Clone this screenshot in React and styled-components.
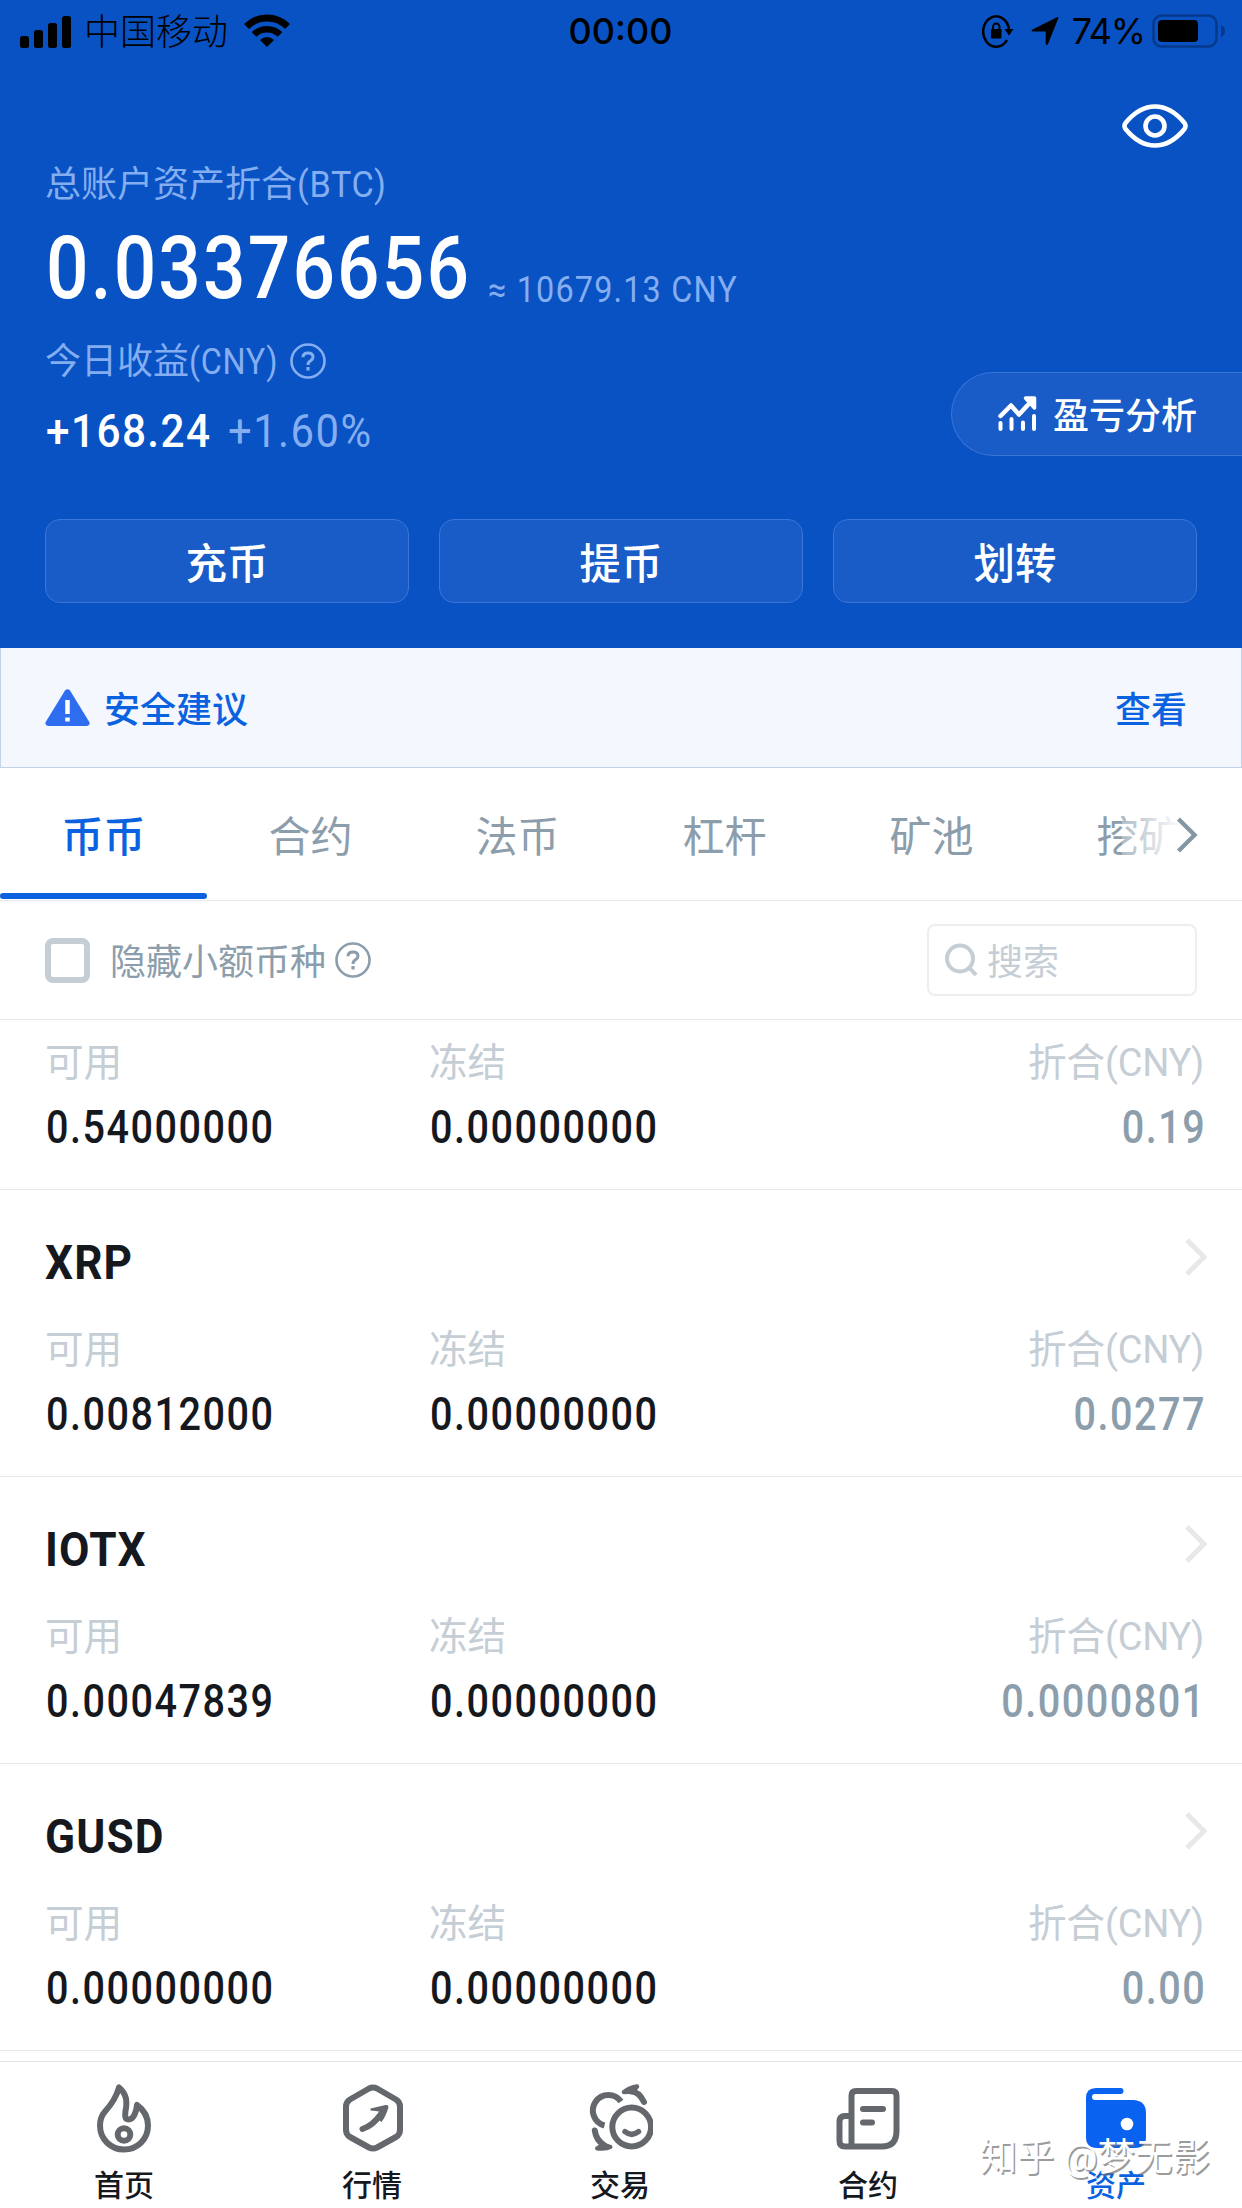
import styled, { createGlobalStyle } from "styled-components";

const GlobalStyle = createGlobalStyle`
  * {
    box-sizing: border-box;
  }
  body {
    margin: 0;
    background: #fff;
    font-family: Roboto, "Noto Sans CJK SC", sans-serif;
    color: #15181d;
  }
  svg {
    display: block;
    flex-shrink: 0;
  }
`;

const Screen = styled.div`
  position: relative;
  width: 1242px;
  height: 2208px;
  display: flex;
  flex-direction: column;
  overflow: hidden;
  background: #fff;
`;

/* narrows latin text and digits to DIN proportions */
const Din = styled.span`
  display: inline-block;
  transform: scaleX(${(props) => props.$fit || 0.86});
  transform-origin: ${(props) => (props.$right ? "right" : "left")} center;
  letter-spacing: ${(props) => props.$gap || "0.038em"};
  margin-right: ${(props) => (props.$right ? "-0.038em" : 0)};
  white-space: nowrap;
`;

/* header */
const Header = styled.header`
  height: 648px;
  flex-shrink: 0;
  background: #0852c4;
  color: #fff;
`;
const StatusBar = styled.div`
  height: 62px;
  display: grid;
  grid-template-columns: 1fr auto 1fr;
  align-items: center;
  padding: 0 16px;
  color: #000;
  font-family: Inter, "Noto Sans CJK SC", sans-serif;
`;
const StatusSide = styled.div`
  display: flex;
  align-items: center;
  justify-content: ${(props) => (props.$end ? "flex-end" : "flex-start")};
`;
const StatusGlyphs = styled.div`
  display: flex;
  align-items: center;
  gap: 17px;
`;
const Carrier = styled.span`
  margin: 1px 16px 0 12px;
  font-size: 36px;
  line-height: 40px;
  font-weight: 300;
`;
const Clock = styled.span`
  padding-right: 1px;
  font-size: 36px;
  font-weight: 500;
  line-height: 40px;
`;
const Percent = styled.span`
  margin: 0 7px 0 13px;
  font-size: 36px;
  line-height: 40px;
  letter-spacing: -1.2px;
`;
const Toolbar = styled.div`
  height: 98px;
  padding: 30px 53px 0 0;
  display: flex;
  align-items: center;
  justify-content: flex-end;
`;
const Caption = styled.div`
  display: flex;
  align-items: center;
  height: 48px;
  padding-left: 45px;
  font-size: 36px;
  line-height: 50px;
  color: #84aef0;
`;
const CaptionText = styled.span`
  padding-top: 2px;
`;
const CaptionUnit = styled.span`
  display: inline-block;
  width: ${(props) => props.$width || "auto"};
  padding-top: 2px;
`;
const TotalRow = styled.div`
  display: flex;
  height: 100px;
  margin: 10px 0 19px;
  padding-left: 46px;
`;
const Total = styled.div`
  width: 423px;
  font-size: 87px;
  font-weight: 500;
  line-height: 100px;
`;
const Approx = styled.div`
  margin: 48px 0 0 19px;
  font-size: 36px;
  line-height: 48px;
  color: #84aef0;
`;
const ProfitRow = styled.div`
  display: flex;
  justify-content: space-between;
  height: 123px;
`;
const Profit = styled.div`
  display: grid;
  grid-template-columns: 182px auto;
  margin-top: 16px;
  padding-left: 46px;
  font-size: 47px;
  line-height: 60px;
  font-weight: 500;
`;
const ProfitRate = styled.span`
  font-weight: 400;
  color: #84aef0;
`;
const AnalysisButton = styled.button`
  display: flex;
  align-items: center;
  gap: 16px;
  width: 291px;
  height: 84px;
  margin-top: 35px;
  padding: 0 0 2px 46px;
  border: 1px solid #3a75d8;
  border-right: 0;
  border-radius: 42px 0 0 42px;
  background: #195cc7;
  color: #fff;
  font-family: inherit;
  font-size: 36px;
  font-weight: 500;
`;
const Actions = styled.div`
  display: grid;
  grid-template-columns: repeat(3, 1fr);
  gap: 30px;
  margin-top: 59px;
  padding: 0 45px;
`;
const ActionButton = styled.button`
  height: 84px;
  padding: 0 0 1px;
  border: 1px solid #3a75d8;
  border-radius: 15px;
  background: #195cc7;
  color: #fff;
  font-family: inherit;
  font-size: 41.5px;
  font-weight: 500;
`;

/* notice */
const Notice = styled.div`
  display: flex;
  align-items: center;
  height: 120px;
  flex-shrink: 0;
  padding: 0 54px 0 44px;
  border: 1px solid #bfd3ea;
  border-top: 0;
  background: #f4f7fe;
  color: #0a62e0;
  font-size: 36px;
  font-weight: 500;
`;
const NoticeText = styled.span`
  flex: 1;
  margin: -1px 0 0 14px;
`;
const NoticeLink = styled.span`
  margin-top: -1px;
`;

/* tabs */
const TabBar = styled.nav`
  position: relative;
  display: flex;
  height: 133px;
  flex-shrink: 0;
  border-bottom: 1px solid #e6e9ec;
  overflow: hidden;
`;
const Tab = styled.div`
  display: flex;
  flex-direction: column;
  justify-content: space-between;
  flex: 0 0 207px;
  height: 131px;
  padding-top: 40px;
  text-align: center;
  font-size: 42px;
  line-height: 60px;
  font-weight: ${(props) => (props.$active ? 500 : 400)};
  color: ${(props) => (props.$active ? "#0a62e0" : "#8c9dab")};

  &::after {
    content: "";
    height: 6px;
    border-radius: 3px;
    background: ${(props) => (props.$active ? "#0a62e0" : "transparent")};
  }
`;
const TabFade = styled.div`
  position: absolute;
  top: 0;
  right: 0;
  display: flex;
  align-items: center;
  justify-content: flex-end;
  width: 120px;
  height: 131px;
  padding: 2px 44px 0 0;
  background: linear-gradient(to right, rgba(255, 255, 255, 0.3), #fff 50%);
`;

/* filter */
const FilterRow = styled.div`
  display: flex;
  align-items: center;
  height: 119px;
  flex-shrink: 0;
  padding: 0 45px;
  border-bottom: 1px solid #e6e9ec;
  color: #8c9dab;
  font-size: 36px;
`;
const Checkbox = styled.div`
  width: 45px;
  height: 45px;
  margin-right: 20px;
  border: 6px solid #c5cdd5;
  border-radius: 8px;
`;
const FilterLabel = styled.div`
  display: flex;
  align-items: center;
  gap: 9px;
  flex: 1;
`;
const FieldText = styled.span`
  margin-top: -2px;
`;
const SearchBox = styled.div`
  display: flex;
  align-items: center;
  gap: 9px;
  width: 270px;
  height: 72px;
  padding-left: 16px;
  border: 2px solid #eceef0;
  border-radius: 8px;
  color: #c5cdd5;
`;

/* coins */
const CoinList = styled.div`
  height: 1031px;
  flex-shrink: 0;
  display: flex;
  flex-direction: column;
  justify-content: flex-end;
  overflow: hidden;
`;
const Coin = styled.section`
  height: 287px;
  flex-shrink: 0;
  padding: 36px 38px 0 45px;
  border-bottom: 1px solid #e6e9ec;
`;
const CoinHead = styled.div`
  display: flex;
  align-items: center;
  justify-content: space-between;
  height: 72px;
  margin-right: -3px;

  svg {
    margin-bottom: 10px;
  }
`;
const CoinName = styled.h3`
  margin: 2px 0 0;
  font-size: 48px;
  line-height: 60px;
  font-weight: 700;
`;
const CoinStats = styled.div`
  display: grid;
  grid-template-columns: 384px 1fr auto;
  margin-top: 26px;
`;
const Stat = styled.div`
  text-align: ${(props) => (props.$right ? "right" : "left")};
`;
const StatLabel = styled.div`
  font-size: 38.6px;
  line-height: 52px;
  color: #c5cdd5;
`;
const StatUnit = styled.span`
  font-size: 38px;
  letter-spacing: -0.3px;
`;
const StatValue = styled.div`
  margin-top: 10px;
  padding-left: 1px;
  font-size: 46px;
  line-height: 56px;
  font-weight: 500;
  color: ${(props) => (props.$muted ? "#8c9dab" : "#15181d")};
`;

/* bottom nav */
const BottomNav = styled.nav`
  display: grid;
  grid-template-columns: repeat(5, 1fr);
  height: 147px;
  margin-top: 10px;
  padding-right: 2px;
  border-top: 1px solid #dfe3e6;
`;
const NavItem = styled.div`
  display: flex;
  flex-direction: column;
  align-items: center;
  padding-top: 20px;
  font-size: 30px;
  line-height: 40px;
  font-weight: 500;
  color: ${(props) => (props.$active ? "#0a62e0" : "#15181d")};

  svg {
    margin-bottom: 12px;
  }
`;
const Watermark = styled.div`
  position: absolute;
  right: 32px;
  bottom: 24px;
  font-size: 37.5px;
  line-height: 54px;
  color: #fff;
  text-shadow: 1.5px 2px 0.5px rgba(110, 110, 110, 0.7);
`;

const SignalIcon = () => (
  <svg width="56" height="33" viewBox="-4 0 56 33">
    <rect x="0" y="21" width="9" height="12" rx="2.5" />
    <rect x="14" y="15" width="9" height="18" rx="2.5" />
    <rect x="28" y="8" width="9" height="25" rx="2.5" />
    <rect x="42" y="1" width="9" height="32" rx="2.5" />
  </svg>
);

const WifiIcon = () => (
  <svg width="46" height="34" viewBox="0 0 46 34" fill="none" stroke="#000">
    <path d="M2.5 12.5A29 29 0 0 1 43.5 12.5" strokeWidth="7" />
    <path d="M10 20.5A18.5 18.5 0 0 1 36 20.5" strokeWidth="6.5" />
    <path d="M16 26Q23 20 30 26L23 33Z" fill="#000" stroke="none" />
  </svg>
);

const RotationLockIcon = () => (
  <svg width="32" height="34" viewBox="0 -2 32 34" fill="none" stroke="#000">
    <path d="M25 24A13 15.2 0 1 1 27 13" strokeWidth="2.5" />
    <path d="M22.5 13H31.5L27 19.5Z" fill="#000" stroke="none" />
    <rect x="9" y="13" width="10.5" height="9.5" rx="1" fill="#000" stroke="none" />
    <path d="M11 14V11A3.2 3.4 0 0 1 17.5 11V14" strokeWidth="2" />
  </svg>
);

const LocationIcon = () => (
  <svg width="28" height="30" viewBox="0 0 28 30">
    <path d="M1.5 13.5L26 1.2Q28 .5 27.2 2.5L17 28Q15.5 30.5 14.7 27.5V15.5H2Q-.5 15 1.5 13.5Z" />
  </svg>
);

const BatteryIcon = () => (
  <svg width="74" height="34" viewBox="0 0 74 34">
    <rect x="1.5" y="1.5" width="63" height="31" rx="8" fill="none" stroke="#06398a" strokeWidth="2.5" />
    <rect x="6" y="6" width="40" height="22" rx="4" />
    <path d="M69 11Q73 13 73 17T69 23Z" fill="#06398a" />
  </svg>
);

const EyeIcon = () => (
  <svg width="68" height="44" viewBox="0 0 68 44" fill="none" stroke="#fff" strokeWidth="4.6">
    <path d="M4.5 19Q18 2.5 34 2.5T63.5 19Q65.5 22 63.5 25Q50 41.5 34 41.5T4.5 25Q2.5 22 4.5 19Z" />
    <circle cx="34" cy="22" r="9.5" />
  </svg>
);

const HelpIcon = () => (
  <svg width="36" height="36" viewBox="0 0 36 36" fill="none" stroke="currentColor">
    <circle cx="18" cy="18" r="16.5" strokeWidth="2.6" />
    <path d="M13 14.2Q13 10 18 10T23 14Q23 16 20.5 17.7Q18 19.2 18 22" strokeWidth="3" />
    <path d="M18 24V27.5" strokeWidth="3.2" />
  </svg>
);

const TrendIcon = () => (
  <svg width="39" height="36" viewBox="0 0 39 36" fill="none" stroke="#fff" strokeWidth="4.5" strokeLinecap="round" strokeLinejoin="round">
    <path d="M2.5 21L13 10.5L21 19.5L34 5.5" />
    <path d="M27.5 3H36.5V13Z" fill="#fff" strokeWidth="3.5" />
    <path d="M2.5 28V34M13.5 24V34M25 27.5V34M36 21V34" strokeWidth="4" />
  </svg>
);

const WarningIcon = () => (
  <svg width="45" height="37" viewBox="0 0 45 37">
    <path d="M20 1.5Q22.5 -1.2 25 1.5L44.3 33Q45.5 36.5 42 37H3Q-.5 36.5 .7 33Z" fill="#2f6df0" />
    <path d="M22.5 11V25M22.5 28.5V32.5" stroke="#fff" strokeWidth="4.5" />
  </svg>
);

const Chevron = ({ color, strokeWidth, width, height }) => (
  <svg width={width} height={height} viewBox="0 0 22 38" fill="none" stroke={color} strokeWidth={strokeWidth}>
    <path d="M2 2L19 19L2 36" />
  </svg>
);

const SearchIcon = () => (
  <svg width="33" height="34" viewBox="0 0 33 34" fill="none" stroke="#c5cdd5" strokeWidth="4">
    <circle cx="15" cy="15.5" r="13" />
    <path d="M24.5 25L31 32" />
  </svg>
);

const HomeIcon = () => (
  <svg width="62" height="72" viewBox="0 0 62 72" fill="none" stroke="#64686d" strokeWidth="6" strokeLinejoin="round">
    <path d="M26 5.5C23 16 18 23 12 29.5C8.5 33.5 7 38 7 43.5C7 57.5 18 67.5 31 67.5C44.5 67.5 55 57 55 43.5C55 35 51 28 44 23C43.5 30 40.5 37.5 35.5 37.5C31.5 37.5 32 33.5 32.5 29C34.5 19 33.5 12 26 5.5Z" />
    <circle cx="31" cy="52.5" r="6.3" />
  </svg>
);

const MarketIcon = () => (
  <svg width="62" height="72" viewBox="0 0 62 72" fill="none" stroke="#64686d" strokeWidth="6" strokeLinejoin="round">
    <path d="M28 6.5Q32 4.5 36 6.5L55 17.5Q59 20 59 24.5V48Q59 52.5 55 55L36 65.5Q32 67.5 28 65.5L9 55Q5 52.5 5 48V24.5Q5 20 9 17.5Z" />
    <path d="M21.5 47Q32 43.5 40 32" strokeLinecap="round" />
    <path d="M29.5 26.5L44.5 23Q48 22.5 47.3 26Q44.5 35 40.5 40L35.5 36Q38.5 32 39 29.8Q35 29 29.5 28.5Z" fill="#64686d" stroke="none" />
  </svg>
);

const TradeIcon = () => (
  <svg width="66" height="72" viewBox="-1 0 66 72" fill="none" stroke="#64686d" strokeWidth="6">
    <circle cx="43.7" cy="45" r="19.4" />
    <path d="M33 19.5A15.5 15.5 0 1 0 16.5 43.5" />
    <path d="M37 49.7Q43.7 55 50.5 49.7" strokeLinecap="round" strokeWidth="5.5" />
    <path d="M43 9.5Q51 9.5 56 20" strokeLinecap="round" />
    <path d="M6.8 48.5Q8 58 16 63" strokeLinecap="round" />
    <path d="M36 10Q42 5.5 49 4.5Q47 7.5 44 9.5Z" fill="#64686d" strokeWidth="4.5" strokeLinejoin="round" />
    <path d="M9 66.5Q18 67.5 22.5 65L15 62.5Z" fill="#64686d" strokeWidth="4" strokeLinejoin="round" />
  </svg>
);

const ContractIcon = () => (
  <svg width="64" height="72" viewBox="0 0 64 72" fill="none" stroke="#64686d" strokeWidth="6" strokeLinejoin="round">
    <path d="M15.5 64.5V13.5Q15.5 9 20 9H56Q60.5 9 60.5 13.5V49Q60.5 64.5 46 64.5H9Q3.5 64.5 3.5 59V39.5Q3.5 34 9 34H15.5" />
    <path d="M27 27H47M27 40.5H36" strokeLinecap="round" />
  </svg>
);

const WalletIcon = () => (
  <svg width="60" height="72" viewBox="0 0 60 72">
    <path
      d="M10 6H34.5A3 3 0 0 1 34.5 12H9A3 3 0 0 0 9 18H48Q60 19 60 31V55Q60 66 49 66H11Q0 66 0 55V16Q0 6 10 6Z"
      fill="#0a62f0"
    />
    <circle cx="41" cy="42" r="6.3" fill="#fff" />
  </svg>
);

const tabs = ["币币", "合约", "法币", "杠杆", "矿池", "挖矿"];

const coins = [
  { name: "TRX", available: "0.54000000", frozen: "0.00000000", value: "0.19" },
  { name: "XRP", available: "0.00812000", frozen: "0.00000000", value: "0.0277" },
  { name: "IOTX", available: "0.00047839", frozen: "0.00000000", value: "0.0000801" },
  { name: "GUSD", available: "0.00000000", frozen: "0.00000000", value: "0.00" },
];

const navItems = [
  { label: "首页", Icon: HomeIcon },
  { label: "行情", Icon: MarketIcon },
  { label: "交易", Icon: TradeIcon },
  { label: "合约", Icon: ContractIcon },
  { label: "资产", Icon: WalletIcon, active: true },
];

const CoinRow = ({ coin, showHead }) => (
  <Coin>
    <CoinHead>
      {showHead && (
        <>
          <CoinName>
            <Din $fit={0.92} $gap="0.025em">
              {coin.name}
            </Din>
          </CoinName>
          <Chevron color="#e7e8ea" strokeWidth={5} width={22} height={38} />
        </>
      )}
    </CoinHead>
    <CoinStats>
      <Stat>
        <StatLabel>可用</StatLabel>
        <StatValue>
          <Din>{coin.available}</Din>
        </StatValue>
      </Stat>
      <Stat>
        <StatLabel>冻结</StatLabel>
        <StatValue>
          <Din>{coin.frozen}</Din>
        </StatValue>
      </Stat>
      <Stat $right>
        <StatLabel>
          折合<StatUnit>(CNY)</StatUnit>
        </StatLabel>
        <StatValue $muted>
          <Din $right>{coin.value}</Din>
        </StatValue>
      </Stat>
    </CoinStats>
  </Coin>
);

const App = () => {
  return (
    <>
      <GlobalStyle />
      <Screen>
        <Header>
          <StatusBar>
            <StatusSide>
              <SignalIcon />
              <Carrier>中国移动</Carrier>
              <WifiIcon />
            </StatusSide>
            <Clock>00:00</Clock>
            <StatusSide $end>
              <StatusGlyphs>
                <RotationLockIcon />
                <LocationIcon />
              </StatusGlyphs>
              <Percent>74%</Percent>
              <BatteryIcon />
            </StatusSide>
          </StatusBar>
          <Toolbar>
            <EyeIcon />
          </Toolbar>
          <Caption>
            <CaptionText>总账户资产折合</CaptionText>
            <CaptionUnit>
              <Din $fit={0.95} $gap="0.02em">
                (BTC)
              </Din>
            </CaptionUnit>
          </Caption>
          <TotalRow>
            <Total>
              <Din $gap="0.029em">0.03376656</Din>
            </Total>
            <Approx>
              <Din $fit={0.9} $gap="0.036em">
                ≈ 10679.13 CNY
              </Din>
            </Approx>
          </TotalRow>
          <ProfitRow>
            <div>
              <Caption>
                <CaptionText>今日收益</CaptionText>
                <CaptionUnit $width="101px">
                  <Din $fit={0.9} $gap="0.02em">
                    (CNY)
                  </Din>
                </CaptionUnit>
                <HelpIcon />
              </Caption>
              <Profit>
                <Din $fit={0.9} $gap="0.034em">
                  +168.24
                </Din>
                <ProfitRate>
                  <Din $fit={0.89} $gap="0.034em">
                    +1.60%
                  </Din>
                </ProfitRate>
              </Profit>
            </div>
            <AnalysisButton>
              <TrendIcon />
              盈亏分析
            </AnalysisButton>
          </ProfitRow>
          <Actions>
            <ActionButton>充币</ActionButton>
            <ActionButton>提币</ActionButton>
            <ActionButton>划转</ActionButton>
          </Actions>
        </Header>
        <Notice>
          <WarningIcon />
          <NoticeText>安全建议</NoticeText>
          <NoticeLink>查看</NoticeLink>
        </Notice>
        <TabBar>
          {tabs.map((tab, index) => (
            <Tab key={tab} $active={index === 0}>
              {tab}
            </Tab>
          ))}
          <TabFade>
            <Chevron color="#8296a3" strokeWidth={4.5} width={22} height={36} />
          </TabFade>
        </TabBar>
        <FilterRow>
          <Checkbox />
          <FilterLabel>
            <FieldText>隐藏小额币种</FieldText>
            <HelpIcon />
          </FilterLabel>
          <SearchBox>
            <SearchIcon />
            <FieldText>搜索</FieldText>
          </SearchBox>
        </FilterRow>
        <CoinList>
          {coins.map((coin, index) => (
            <CoinRow coin={coin} showHead={index > 0} key={coin.name} />
          ))}
        </CoinList>
        <BottomNav>
          {navItems.map(({ label, Icon, active }) => (
            <NavItem $active={active} key={label}>
              <Icon />
              {label}
            </NavItem>
          ))}
        </BottomNav>
        <Watermark>知乎 @梦无影</Watermark>
      </Screen>
    </>
  );
};

export default App;
